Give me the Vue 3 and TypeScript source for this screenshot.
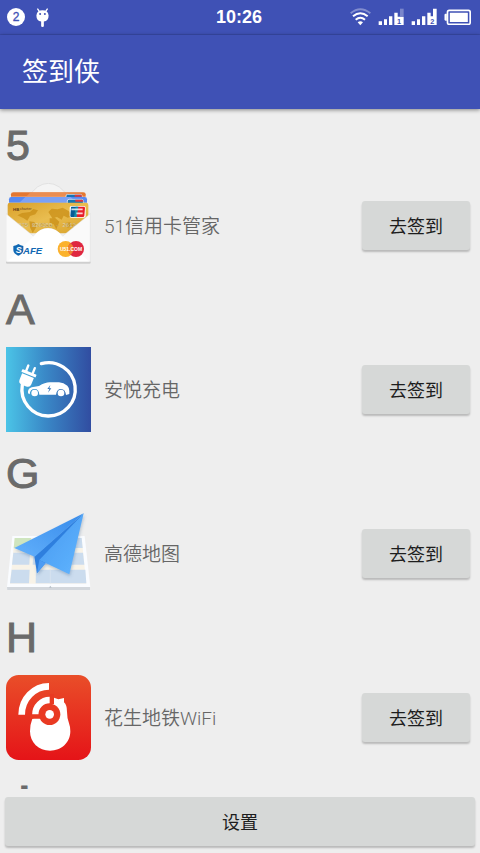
<script setup lang="ts">
interface Section {
  letter: string
  icon?: 'card' | 'charge' | 'map' | 'peanut'
  name?: string
}

const sections: Section[] = [
  { letter: '5', icon: 'card', name: '51信用卡管家' },
  { letter: 'A', icon: 'charge', name: '安悦充电' },
  { letter: 'G', icon: 'map', name: '高德地图' },
  { letter: 'H', icon: 'peanut', name: '花生地铁WiFi' },
  { letter: 'J' },
]
</script>

<template>
  <div class="screen">
    <div class="status">
      <div class="status-side">
        <svg class="status-count" viewBox="0 0 54 54" aria-hidden="true">
          <circle cx="27" cy="27" r="27" fill="#fff" />
          <text x="27" y="39" text-anchor="middle" class="count-text">2</text>
        </svg>
        <svg class="status-bot" viewBox="108 24 38 56" aria-hidden="true">
          <path d="M113 27l5 8M141 27l-5 8" stroke="#fff" stroke-width="4" stroke-linecap="round" />
          <path d="M109 46q2-15 18-15t18 15q0 16-14 18v13q0 3-4 3t-4-3V64q-14-2-14-18z" fill="#fff" />
          <circle cx="120" cy="42" r="3" fill="#3f51b5" />
          <circle cx="134" cy="42" r="3" fill="#3f51b5" />
        </svg>
      </div>
      <time class="clock">10:26</time>
      <div class="status-side status-right">
        <svg class="wifi" viewBox="30 25 63 54" aria-hidden="true">
          <g fill="none" stroke="#fff" stroke-width="6">
            <path d="M32 41Q61 17 91 41" opacity=".35" />
            <path d="M39 50q22-19 44 0" />
            <path d="M47 60q14-12 28 0" />
          </g>
          <path d="M53 68q8-6 16 0l-8 9z" fill="#fff" />
        </svg>
        <svg class="signal" viewBox="115 25 78 54" aria-hidden="true">
          <path d="M117 65h10v11h-10zM133 59h9v17h-9zM148 50h10v26h-10zM164 39h10v12h18v25h-28z" fill="#fff" />
          <path d="M181 27h11v23h-11z" fill="#fff" opacity=".3" />
          <text x="178" y="72" text-anchor="middle" class="sim-text">1</text>
        </svg>
        <svg class="signal" viewBox="214 25 78 54" aria-hidden="true">
          <path d="M216 65h10v11h-10zM232 59h9v17h-9zM247 50h10v26h-10zM263 39h10v11h7V27h11v49h-28z" fill="#fff" />
          <text x="278" y="72" text-anchor="middle" class="sim-text">2</text>
        </svg>
        <svg class="battery" viewBox="313 28 80 48" aria-hidden="true">
          <path d="M321 42h-4q-3 0-3 4v13q0 4 3 4h4" fill="#fff" />
          <rect x="323" y="32" width="68" height="42" rx="5" fill="none" stroke="#fff" stroke-width="5" />
          <rect x="330" y="39" width="54" height="28" rx="1" fill="#fff" />
        </svg>
      </div>
    </div>

    <header class="app-bar">
      <h1 class="title">签到侠</h1>
    </header>

    <main class="list">
      <section v-for="section in sections" :key="section.letter" class="section">
        <h2 class="letter">{{ section.letter }}</h2>
        <div v-if="section.name" class="row">
          <svg v-if="section.icon === 'card'" class="icon" viewBox="18 189 255 255" aria-hidden="true">
            <defs>
              <linearGradient id="gold" x1="0" x2="1" y1="0" y2="1">
                <stop offset="0" stop-color="#d9a02a" />
                <stop offset=".5" stop-color="#e9bd50" />
                <stop offset="1" stop-color="#d8a128" />
              </linearGradient>
            </defs>
            <path d="M30 280L112 201q33-22 66 0l84 79z" fill="#f4f4f4" stroke="#d9d9d9" stroke-width="2" />
            <path d="M33 230v-7q0-6 7-6h210q7 0 7 6v7z" fill="#e47730" />
            <path d="M92 217h108l14 13H78z" fill="#ee9d68" opacity=".6" />
            <rect x="198" y="223" width="48" height="14" rx="5" fill="#1875b5" stroke="#fff" stroke-width="2" />
            <path d="M224 224h19q3 2 3 6h-22z" fill="#e2383c" />
            <path d="M27 248v-10q0-7 7-7h220q7 0 7 7v10z" fill="#5689f3" />
            <path d="M76 231h136l18 17H58z" fill="#8babf5" opacity=".7" />
            <rect x="202" y="238" width="48" height="20" rx="5" fill="#1875b5" stroke="#fff" stroke-width="2" />
            <path d="M226 239h21q3 2 3 6h-24z" fill="#e2383c" />
            <path d="M23 340v-85q0-7 7-7h228q7 0 7 7v85z" fill="url(#gold)" />
            <path d="M52 286l14-7 24-3 10-9 14 4-8 12-16 5-8 14-11-7zM88 304l15 2 8 12-13 21-8-17zM145 276l10-10 18 2 15-5 18 10 12 15-15 5-12-6-6 12-14-8-14 4zM149 295l16-2 13 12-9 23-8-15-12-4zM196 309l14-2 9 10-16 6z" fill="#c78c12" opacity=".7" />
            <text x="39" y="272" class="bank-text">HB</text>
            <text x="60" y="271" class="bank-small">charter</text>
            <text x="55" y="322" class="digits">075 826300 · 2613</text>
            <rect x="209" y="258" width="48" height="35" rx="5" fill="#fff" />
            <path d="M215 260h18l-5 31h-14q-3 0-3-4l2-24q0-3 2-3z" fill="#075b96" />
            <path d="M233 260h18q4 0 4 4l-2 24q0 3-4 3h-21z" fill="#e71f2b" />
            <path d="M227 260h8l-5 31h-8z" fill="#168ca5" />
            <path d="M214 268h34M229 280h19" stroke="#fff" stroke-width="5" opacity=".8" />
            <path d="M18 281l83 68q18-24 43-24t43 24l84-68v142q0 4-4 4H22q-4 0-4-4z" fill="#fafafa" stroke="#ddd" stroke-width="1.5" />
            <path d="M20 427l81-78q18-24 43-24t43 24l83 78z" fill="#fff" />
            <path d="M18 425h254v3q0 3-4 3H22q-4 0-4-3z" fill="#cfcfcf" />
            <path d="M40 378q9-1 15-6 7 5 15 6v12q0 11-15 17-15-6-15-17z" fill="#1268b3" />
            <text x="47" y="400" class="safe-s">S</text>
            <text x="69" y="401" class="safe-text">AFE</text>
            <circle cx="197" cy="387" r="24" fill="#fbb22c" />
            <circle cx="228" cy="387" r="24" fill="#df2740" />
            <path d="M212 369a24 24 0 0 1 0 36a24 24 0 0 1 0-36" fill="#f08030" />
            <text x="213" y="393" text-anchor="middle" class="com-text">U51.COM</text>
          </svg>

          <svg v-else-if="section.icon === 'charge'" class="icon" viewBox="18 200 255 255" aria-hidden="true">
            <defs>
              <linearGradient id="charge-blue" x1="0" x2="1" y1="0" y2="0">
                <stop offset="0" stop-color="#4bc4e7" />
                <stop offset=".45" stop-color="#3a8ac8" />
                <stop offset="1" stop-color="#314da1" />
              </linearGradient>
            </defs>
            <path d="M18 200h255v255H18z" fill="url(#charge-blue)" />
            <path d="M124 250A80 80 0 1 1 67 313" fill="none" stroke="#fff" stroke-width="10" stroke-linecap="round" />
            <g transform="rotate(22 84 286)" fill="#fff">
              <rect x="70" y="254" width="7" height="27" rx="3.5" />
              <rect x="91" y="254" width="7" height="27" rx="3.5" />
              <rect x="61" y="274" width="46" height="9" rx="2" />
              <path d="M65 286h38v20q0 12-12 12H77q-12 0-12-12z" />
            </g>
            <path d="M84 333q1-9 11-12l22-4q18-11 32-11h28q14 1 25 10 6 6 6 16v9l-10 3q-2-18-15-18t-15 17h-50q-1-17-14-17-14 0-15 16l-5-3z" fill="#fff" />
            <circle cx="104" cy="338" r="10" fill="#fff" />
            <circle cx="183" cy="338" r="10" fill="#fff" />
            <path d="M151 314l-9 12h6l-4 11 10-13h-6z" fill="#397abd" />
          </svg>

          <svg v-else-if="section.icon === 'map'" class="icon" viewBox="18 198 255 255" aria-hidden="true">
            <defs>
              <linearGradient id="plane-left" x1="0" x2="1" y1="1" y2="0">
                <stop offset="0" stop-color="#63b1fc" />
                <stop offset="1" stop-color="#368aea" />
              </linearGradient>
              <linearGradient id="plane-right" x1="0" x2="1" y1="0" y2="1">
                <stop offset="0" stop-color="#4598ef" />
                <stop offset="1" stop-color="#61b5ff" />
              </linearGradient>
              <filter id="plane-shadow" x="-20%" y="-20%" width="140%" height="150%">
                <feDropShadow dx="2" dy="6" stdDeviation="4" flood-color="#4a6b92" flood-opacity=".35" />
              </filter>
            </defs>
            <path d="M21 426l1 9h248V426z" fill="#d3d7dc" />
            <path d="M37 273h217l17 153H21z" fill="#fafcff" />
            <path d="M44 279h201l14 137H30z" fill="#f8f3e8" />
            <path d="M44 279h49l-3 31H41z" fill="#cfe5bf" />
            <path d="M103 279h42v31h-44zM155 279h42l2 31h-44zM207 279h38l3 30h-39zM40 323h50l-2 36H36zM100 323h46v36H98zM157 323h43l3 36h-46zM211 323h38l4 36h-39zM35 374h54l-2 41H30zM108 374h148l3 41H107z" fill="#cbdcee" />
            <path d="M151 374v42" stroke="#dce6f0" stroke-width="2" />
            <path d="M151 422l-4 6h8z" fill="#b5bdc6" />
            <g filter="url(#plane-shadow)">
              <path d="M103 334l8 51 30-37 110-143z" fill="#2f7fde" />
              <path d="M118 345l19 10-26 30z" fill="#4d9cf3" />
              <path d="M43 309L251 205 104 335z" fill="url(#plane-left)" />
              <path d="M251 205L118 345l90 43z" fill="url(#plane-right)" />
            </g>
          </svg>

          <svg v-else class="icon" viewBox="18 193 255 255" aria-hidden="true">
            <defs>
              <linearGradient id="peanut-red" x1="0" x2="0" y1="0" y2="1">
                <stop offset="0" stop-color="#e94e29" />
                <stop offset="1" stop-color="#e51418" />
              </linearGradient>
            </defs>
            <rect x="18" y="193" width="255" height="255" rx="38" fill="url(#peanut-red)" />
            <path d="M65 312a82 85 0 0 1 82-85" fill="none" stroke="#fff" stroke-width="20" />
            <path d="M162 261l13 5 17-4v13q9 8 9 28 0 19 6 35 4 10 4 24c0 34-27 58-61 58s-60-24-60-58q0-21 7-38l55-20z" fill="#fff" />
            <circle cx="149" cy="311" r="32" fill="#e93a22" />
            <path d="M149 250h13v30h-13zM90 311h30v13H90z" fill="#e93a22" />
            <path d="M106 311a43 43 0 0 1 43-43" fill="none" stroke="#fff" stroke-width="19" />
            <circle cx="149" cy="311" r="13" fill="#fff" />
          </svg>

          <span class="name">{{ section.name }}</span>
          <button type="button" class="button go">去签到</button>
        </div>
      </section>
    </main>

    <footer class="footer">
      <button type="button" class="button settings">设置</button>
    </footer>
  </div>
</template>

<style>
body {
  margin: 0;
  background: #eee;
}
</style>

<style scoped>
.screen {
  display: flex;
  flex-direction: column;
  height: 100vh;
  background: #eee;
  font-family: "Liberation Sans", "Noto Sans CJK SC", sans-serif;
}

.status {
  display: flex;
  align-items: center;
  box-sizing: border-box;
  height: 35px;
  padding: 0 9px 0 7px;
  border-bottom: 1px solid #394aa8;
  background: #3f51b5;
  color: #fff;
}

.status-side {
  display: flex;
  flex: 1;
  align-items: center;
  gap: 11px;
}

.status-right {
  justify-content: flex-end;
  gap: 7px;
}

.status-count {
  width: 18px;
  height: 18px;
}

.status-bot {
  width: 13px;
  height: 19px;
}

.wifi {
  width: 21px;
  height: 18px;
}

.signal {
  width: 26px;
  height: 18px;
}

.battery {
  width: 27px;
  height: 16px;
}

.clock {
  font-size: 18px;
  font-weight: 700;
  line-height: 36px;
}

.count-text {
  font-size: 36px;
  font-weight: 400;
  fill: #3f51b5;
  stroke: #3f51b5;
}

.sim-text {
  font-size: 22px;
  font-weight: 700;
  fill: #3f51b5;
}

.app-bar {
  position: relative;
  display: flex;
  align-items: center;
  box-sizing: border-box;
  height: 74px;
  padding: 0 22px;
  background: #3f51b5;
  box-shadow: 0 1px 4px rgba(0, 0, 0, 0.45);
}

.title {
  margin: 0;
  color: #fff;
  font-size: 26px;
  font-weight: 400;
  line-height: 38px;
}

.list {
  flex: 1;
  min-height: 0;
  padding: 12px 10px 0 6px;
  overflow-y: auto;
  scrollbar-width: none;
}

.letter {
  margin: 0 0 14px;
  color: #6a6a6a;
  font-size: 43px;
  font-weight: 400;
  line-height: 48px;
  -webkit-text-stroke: 1px #6a6a6a;
}

.section:last-child .letter {
  font-family: Roboto, sans-serif;
  font-weight: 500;
}

.row {
  display: flex;
  align-items: center;
  gap: 13px;
  margin-bottom: 17px;
}

.icon {
  flex: none;
  width: 85px;
  height: 85px;
}

.name {
  flex: 1;
  padding-bottom: 2px;
  color: #666;
  font-family: Roboto, "Noto Sans CJK SC", sans-serif;
  font-size: 19px;
  font-weight: 350;
}

.button {
  height: 49px;
  padding: 0 0 2px;
  border: 0;
  border-radius: 3px;
  background: #d6d8d7;
  box-shadow: 0 2px 2px rgba(0, 0, 0, 0.22);
  color: #1d1d1d;
  font-family: inherit;
  font-size: 18px;
}

.go {
  flex: none;
  width: 108px;
}

.footer {
  padding: 8px 5px 7px;
}

.settings {
  display: block;
  width: 100%;
}

.bank-text {
  font-size: 13px;
  font-weight: 700;
  fill: #5f3a16;
}

.bank-small {
  font-size: 11px;
  fill: #5f3a16;
}

.digits {
  font-family: "Liberation Mono", monospace;
  font-size: 17px;
  font-weight: 700;
  fill: #eee0b8;
  stroke: #a77d2c;
  stroke-width: 0.6;
}

.safe-s {
  font-size: 27px;
  font-style: italic;
  font-weight: 700;
  fill: #fff;
}

.safe-text {
  font-size: 29px;
  font-style: italic;
  font-weight: 700;
  fill: #1268b3;
}

.com-text {
  font-size: 15px;
  font-weight: 700;
  fill: #fff;
}
</style>
